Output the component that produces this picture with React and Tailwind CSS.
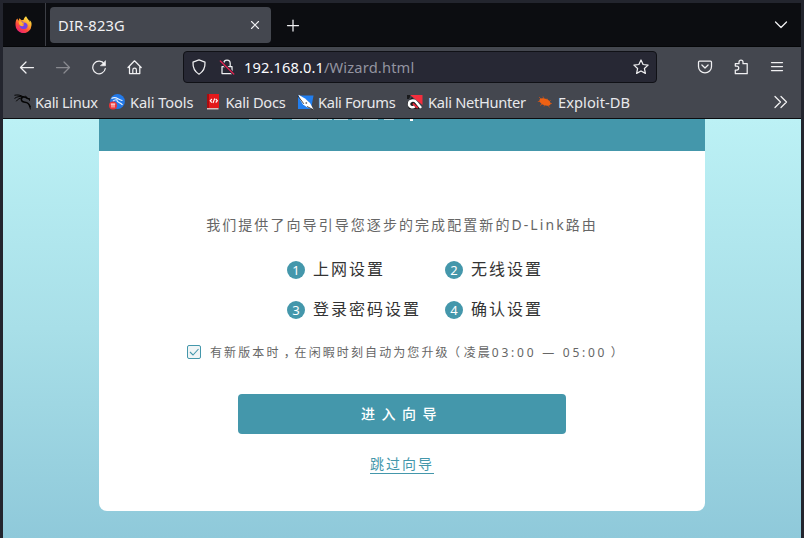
import React from "react";

const line = { fill: "none", stroke: "#f0f0f2", strokeWidth: 1.25, strokeLinecap: "round", strokeLinejoin: "round" };

function Glyph({ children, className = "", size = 16 }) {
  return (
    <svg width={size} height={size} viewBox="0 0 16 16" className={"shrink-0 " + className} {...line}>
      {children}
    </svg>
  );
}

function Firefox() {
  return (
    <svg width="17" height="17" viewBox="0 0 16 16" className="shrink-0">
      <defs>
        <linearGradient id="ff" x1="0.85" y1="0.05" x2="0.2" y2="1">
          <stop offset="0" stopColor="#fff44f" />
          <stop offset="0.35" stopColor="#ffa62b" />
          <stop offset="0.65" stopColor="#ff4a3d" />
          <stop offset="1" stopColor="#e4187c" />
        </linearGradient>
      </defs>
      <path fill="url(#ff)" d="M15.4 6.2c-.4-1-1.2-2-1.9-2.4.5 1 .8 1.900.9 2.500C13.400 4 11.500 3 10.400.300c-1.500.9-2 2.300-2.200 3.200-.7 0-1.300.2-1.900.5L4 2.200 3.400 4.500C2.900 4 2.500 3.200 2.300 2.300 1 3.200.3 5.600.5 8.300A7.500 7.500 0 0 0 15.500 9c.1-1 .1-2-.1-2.800z" />
      <path fill="#7542e5" d="M4.600 6c.8-.9 2.200-1.100 3-.7L8.500 6c1.900.2 3.400 1.300 3.400 3.100 0 2-1.700 3.300-3.700 3.200-2.300 0-3.900-1.500-4-3.700l3 .2c1 0 1.400-.8 1.200-1.200C7.600 7 6 7 4.600 6z" />
      <path fill="#ffb52e" d="M3.600 5c1.600-.2 2.700.2 3.200 1l2 .2c-.1.900-1.200 1-1.800 1.300-.4.900.4 1.400 1.500 1.200-1 1.300-3.200 1.100-4-.2C3.700 7.600 3.400 6 3.600 5z" />
    </svg>
  );
}

function Dragon() {
  return (
    <svg width="18" height="18" viewBox="0 0 18 18" className="shrink-0" fill="none" stroke="#050505" strokeLinecap="round">
      <path strokeWidth="1" d="M.8 2.200c3-.6 5.500-.2 8 1.300M.8 5.200C3.500 3.200 6.500 3.200 9 4M2.500 8C4 5.800 5.500 5.200 8 5" />
      <path strokeWidth="1.600" d="M8 4c2.200-.4 4 .2 5.400 1.400l1.900.6M8 4.600C6.200 7 8 9.200 11 9.200c2.800.2 4.200 1.700 5 4.600" />
      <path strokeWidth=".9" d="M11.600 3l1.500 2M15.300 6l.2 1.500M15.900 13l.4 3" />
    </svg>
  );
}

function Tools() {
  return (
    <svg width="16" height="16" viewBox="0 0 16 16" className="shrink-0">
      <circle cx="8.500" cy="7.500" r="7.400" fill="#2379e8" />
      <path d="M2.500 4.500C5 3 7 3.500 9 4.800s3 1.200 4.500 1.700M4 7.200C5.500 5.800 7 5.500 8.500 6M8 6c-.8 2.500 4 2 5.500 5" fill="none" stroke="#e9f3ff" strokeWidth="1.100" />
      <circle cx="4" cy="11.500" r="4" fill="#ea3438" />
      <path d="M1.800 10h4.400M3 10v3.500M5 10v3.500" stroke="#fff" strokeWidth=".9" />
    </svg>
  );
}

function Docs() {
  return (
    <svg width="16" height="16" viewBox="0 0 16 16" className="mt-px shrink-0">
      <path fill="#a90d10" d="M2 0h2v14H2z" />
      <path fill="#e3191b" d="M4 0h10v14H4z" />
      <path fill="#d9bcbb" d="M2 14h11.500v1.500H2z" />
      <path d="M6.900 5L5.200 6.800l1.700 1.700M10.700 5l1.700 1.800-1.700 1.700M9.700 4.500L8 9" stroke="#fff" strokeWidth="1.100" fill="none" />
    </svg>
  );
}

function Forums() {
  return (
    <svg width="17" height="16" viewBox="0 0 17 16" className="mt-px shrink-0">
      <path fill="#217eef" d="M1 1.500h15.500L14 15H1z" />
      <path fill="#fff" d="M1.500.8L8 4.500l5 4.500 3.500 6.500-6-2-4.500-3L3 5.500z" />
      <path d="M.8 1.800l6 8M10 12.500l6 3" stroke="#17181b" strokeWidth=".8" />
      <circle cx="9.300" cy="9" r=".9" fill="#777" />
    </svg>
  );
}

function NetHunter() {
  return (
    <svg width="16" height="16" viewBox="0 0 16 16" className="mt-px shrink-0">
      <path fill="#191a1c" d="M0 1h4L2 5H0zM0 9l5-6 9 12H2z" />
      <path fill="#f42e3d" d="M3 1h12.500v10L8 5z" />
      <path d="M14 14L9.500 8.500C7 5.300 1.800 6.500 2 10c0 3 3.600 4.200 5.800 2.300" fill="none" stroke="#fff" strokeWidth="2.500" />
      <path d="M5.800 9.500l5 4.500" stroke="#e22839" strokeWidth="1.800" />
    </svg>
  );
}

function Exploit() {
  return (
    <svg width="16" height="16" viewBox="0 0 16 16" className="mt-px shrink-0">
      <path d="M2 3l3 3M6 2.500l1 3M.8 7.500h4M10 4.500l1 2.500M13.500 6l-2 3M15 9.500h-4M3 11.500l3-2M7 12.500l1-3M12.500 13.500l-2-3" stroke="#b9501f" strokeWidth=".9" />
      <ellipse cx="8" cy="8" rx="6" ry="3.200" transform="rotate(22 8 8)" fill="#ef6113" />
    </svg>
  );
}

const bookmarks = [
  { name: "Kali Linux", Icon: Dragon, width: "w-[95px] tracking-[-0.33px]" },
  { name: "Kali Tools", Icon: Tools, width: "w-[95.5px] tracking-[-0.1px]" },
  { name: "Kali Docs", Icon: Docs, width: "w-[92.5px] tracking-[-0.25px]" },
  { name: "Kali Forums", Icon: Forums, width: "w-[110px] tracking-[-0.33px]" },
  { name: "Kali NetHunter", Icon: NetHunter, width: "w-[130px] tracking-[-0.3px]" },
  { name: "Exploit-DB", Icon: Exploit, width: "w-[96px] tracking-[0.05px]" },
];

function Tabs() {
  return (
    <div className="flex h-11 shrink-0 items-start border-b border-[#050608] bg-[#0c0d11]">
      <div className="flex h-[43px] w-[43px] items-center justify-center border-r border-[#3c3e45] pr-0.5">
        <Firefox />
      </div>
      <div className="ml-1 mt-1 flex h-9 w-[221px] items-center justify-between rounded bg-[#44474f] pl-2 pr-2">
        <span className="tracking-[0.2px]">DIR-823G</span>
        <Glyph><path d="M4.500 4.500l7 7M11.500 4.500l-7 7" strokeWidth="1.100" /></Glyph>
      </div>
      <Glyph className="ml-3.5 mt-[15px]"><path d="M2.500 7.500h11M8 2v11" /></Glyph>
      <Glyph className="ml-auto mr-3 mt-[14px]"><path d="M2.500 5L8 10.500 13.500 5" /></Glyph>
    </div>
  );
}

function Navigation() {
  return (
    <div className="flex h-10 shrink-0 items-center pl-4">
      <div className="flex w-[164px] gap-5">
        <Glyph><path d="M1.500 8.500h13M7 3L1.500 8.500 7 14" /></Glyph>
        <Glyph className="opacity-40"><path d="M1.500 8.500h13M9 3l5.500 5.500L9 14" /></Glyph>
        <Glyph>
          <path d="M13.300 5A6.300 6.300 0 1 0 14.300 9.500" />
          <path d="M14.500 2v4.800H9.700z" fill="#f4f4f6" strokeWidth=".6" />
        </Glyph>
        <Glyph><path d="M1 8.500l6.500-6.700L14.200 8.500M2.500 7.500v7h10.300v-7M5.800 14.500V11a1.800 1.800 0 0 1 3.600 0v3.500" /></Glyph>
      </div>
      <div className="flex h-8 w-[474px] items-center rounded border border-[#101116] bg-[#272834] pl-[7px] pr-[7px]">
        <Glyph><path d="M8 .9l6 2.300c.3 5-1.700 9.300-6 12C3.700 12.500 1.700 8.200 2 3.200z" /></Glyph>
        <Glyph className="ml-3">
          <path d="M3 7.500h10v7H3zM4.800 7.500V4.200a3.200 3.200 0 0 1 6.400 0v3.300" />
          <path d="M1.300 2l13.500 13" stroke="#272834" strokeWidth="3" />
          <path d="M1.300 2l13.500 13" stroke="#e2224f" />
        </Glyph>
        <span className="ml-[9px] grow whitespace-nowrap tracking-[0.1px] text-[#fbfbfe]">
          192.168.0.1<span className="tracking-[0.16px] text-[#9394a0]">/Wizard.html</span>
        </span>
        <Glyph><path d="M8 1l2.100 4.500 5 .6-3.700 3.400 1 4.900L8 12l-4.400 2.400 1-4.900L.9 6.100l5-.6z" /></Glyph>
      </div>
      <div className="ml-10 flex gap-5">
        <Glyph><path d="M2.500 2.200h11c.6 0 1 .4 1 1v4.200a6.500 6.500 0 0 1-13 0V3.200c0-.6.400-1 1-1zM4.900 6L8 9l3.100-3" /></Glyph>
        <Glyph><path d="M2.300 14.700V11h1.400a2 2 0 0 0 0-4H2.300V4.700H6V3a2 2 0 0 1 4 0v1.700h4.200v10z" /></Glyph>
        <Glyph><path d="M2.500 3.500h11M2.500 7.500h11M2.500 11.500h11" /></Glyph>
      </div>
    </div>
  );
}

function Bookmarks() {
  return (
    <div className="flex h-8 shrink-0 items-center border-b border-[#0b0c0f] pb-0.5 pl-[11px] text-[#e9e9ec]">
      {bookmarks.map(({ name, Icon, width }) => (
        <div key={name} className={"flex shrink-0 items-center whitespace-nowrap " + width}>
          <span className="flex w-[21px] shrink-0"><Icon /></span>
          {name}
        </div>
      ))}
      <Glyph className="ml-auto mr-3 mt-px"><path d="M2 2.500L7.500 8 2 13.500M8 2.500L13.500 8 8 13.500" /></Glyph>
    </div>
  );
}

function Step({ n, children }) {
  return (
    <div className="flex h-10 items-center text-base tracking-[2px] text-[#333]">
      <span className="mr-2 flex h-[18px] w-[18px] items-center justify-center rounded-full bg-[#4497ab] text-[13px] leading-none tracking-normal text-white">{n}</span>
      <span className="-mt-0.5">{children}</span>
    </div>
  );
}

// Full-width punctuation with its own side bearings trimmed, centred in its cell.
function Mark({ children }) {
  return <span className="pl-[4px] pr-[4px] tracking-normal [font-feature-settings:'palt']">{children}</span>;
}

const brandTops = ["ml-[150px] w-[23px]", "ml-5 w-[25px]", "ml-px w-3.5", "ml-0.5 w-3.5", "ml-1 w-2.5", "ml-px w-[15px]", "ml-1.5 w-2.5"];

function Wizard() {
  return (
    <main className="flex grow flex-col items-center bg-linear-to-b from-[#bcf1f5] via-[#a8dfe8] via-50% to-[#8fc9da]">
      <section className="flex h-[392px] w-[606px] flex-col items-center overflow-hidden rounded-b-lg bg-white">
        <div className="flex h-8 w-full shrink-0 items-start bg-[#4497ab]">
          {brandTops.map((c, i) => <i key={i} className={"h-px bg-white/60 " + c} />)}
          <i className="ml-4 h-0.5 w-[3px] bg-white" />
        </div>
        <p className="mt-16 h-5 whitespace-nowrap text-sm tracking-[2.070px] text-[#666]">我们提供了向导引导您逐步的完成配置新的D-Link路由</p>
        <div className="ml-[10px] mt-[15px] grid w-[240px] grid-cols-[158px_1fr] whitespace-nowrap">
          <Step n="1">上网设置</Step>
          <Step n="2">无线设置</Step>
          <Step n="3">登录密码设置</Step>
          <Step n="4">确认设置</Step>
        </div>
        <div className="mt-3 flex h-5 w-full items-center whitespace-nowrap pl-[88px] text-xs tracking-[2px] text-[#666]">
          <span className="mr-[9px] flex h-3.5 w-3.5 items-center justify-center rounded-xs border border-[#4497ab] bg-[#f0f5f6]">
            <svg width="10" height="8" viewBox="0 0 10 8" fill="none" stroke="#4497ab" strokeWidth="1.100"><path d="M1 4l3 3 5.500-6" /></svg>
          </span>
          <span className="pt-px tracking-[2.100px]">
            有新版本时<Mark>，</Mark>在闲暇时刻自动为您升级<Mark>（</Mark>凌晨<span className="tracking-[2.750px]">03:00 — 05:00</span><Mark>）</Mark>
          </span>
        </div>
        <button className="mt-8 h-10 w-[328px] shrink-0 rounded bg-[#4497ab] text-sm font-medium tracking-[6.500px] text-white">进入向导</button>
        <a className="mt-[21px] h-[19px] border-b border-[#4497ab] text-sm leading-[17px] tracking-[2px] text-[#4497ab]">跳过向导</a>
      </section>
    </main>
  );
}

export default function App() {
  return (
    <div className="flex h-[538px] w-[804px] flex-col border-x-[3px] border-t-[3px] border-[#23252e] bg-[#44474f] font-['Noto_Sans','Noto_Sans_CJK_SC',sans-serif] text-[14.67px] leading-5 text-[#f0f0f3]">
      <Tabs />
      <Navigation />
      <Bookmarks />
      <Wizard />
    </div>
  );
}
